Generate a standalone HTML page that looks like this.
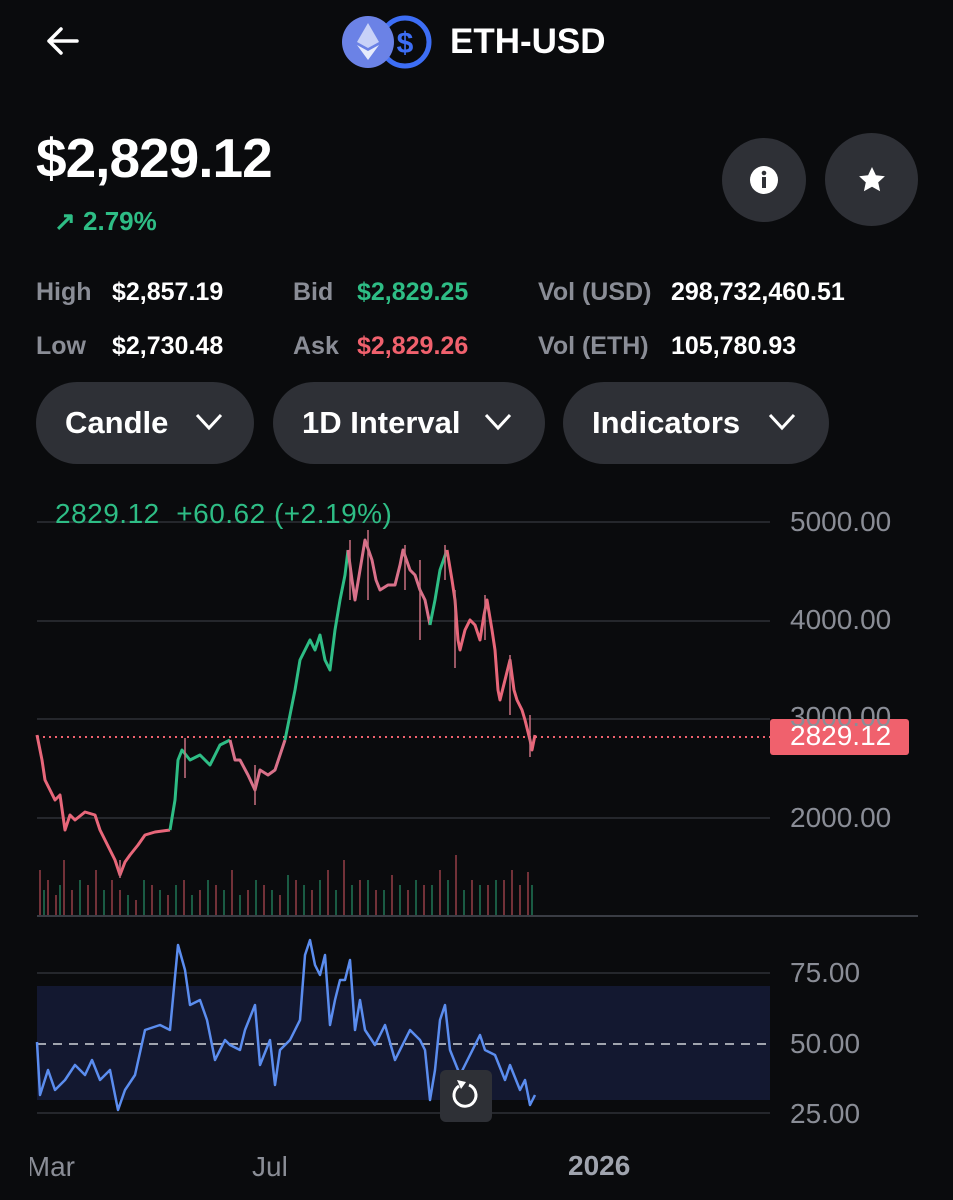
<!DOCTYPE html>
<html><head><meta charset="utf-8"><style>
body{margin:0;width:953px;height:1200px;background:#0a0b0d;color:#fff;font-family:"Liberation Sans",sans-serif;position:relative;overflow:hidden}
.a{position:absolute;white-space:nowrap}
.g{color:#8a8d96}
.pill{position:absolute;top:382px;height:82px;border-radius:41px;background:#2e3036;font-size:31px;font-weight:bold;line-height:82px;box-sizing:border-box;padding-left:29px}
.pill svg{position:absolute;top:30px}
.stat{font-size:25px;font-weight:bold}
.ax{font-size:28px;color:#8a8d96}
</style></head><body>
<svg class="a" style="left:44px;top:26px" width="36" height="30" viewBox="0 0 36 30"><path d="M33 15H5M17 3L5 15l12 12" stroke="#fff" stroke-width="3.5" fill="none" stroke-linecap="round" stroke-linejoin="round"/></svg>
<svg class="a" style="left:340px;top:15px" width="94" height="56" viewBox="0 0 94 56">
<circle cx="65" cy="27" r="24" fill="#0a0b0d" stroke="#3d6ef5" stroke-width="5"/>
<text x="65" y="38" font-size="30" font-weight="bold" fill="#3d6ef5" text-anchor="middle" font-family="Liberation Sans">$</text>
<circle cx="28" cy="27" r="26" fill="#6b82e6"/>
<path d="M28 8L17 27l11 6 11-6z" fill="#c8d2f8"/><path d="M17 30l11 15 11-15-11 6z" fill="#e6ebfc"/>
</svg>
<div class="a" style="left:450px;top:22px;font-size:35px;font-weight:bold">ETH-USD</div>
<div class="a" style="left:36px;top:126px;font-size:55px;font-weight:bold;letter-spacing:-1px">$2,829.12</div>
<div class="a" style="left:54px;top:206px;font-size:26px;color:#2ebd85;font-weight:bold">↗ 2.79%</div>
<div class="a" style="left:722px;top:138px;width:84px;height:84px;border-radius:50%;background:#2e3036"></div>
<svg class="a" style="left:749px;top:165px" width="30" height="30" viewBox="0 0 30 30"><circle cx="15" cy="15" r="14" fill="#fff"/><rect x="13" y="12" width="4" height="11" fill="#2e3036"/><circle cx="15" cy="8" r="2.3" fill="#2e3036"/></svg>
<div class="a" style="left:825px;top:133px;width:93px;height:93px;border-radius:50%;background:#2e3036"></div>
<svg class="a" style="left:857px;top:165px" width="30" height="30" viewBox="0 0 30 30"><path d="M15 2l3.9 8.3 9 1-6.7 6.1 1.9 8.9L15 21.8l-8.1 4.5 1.9-8.9L2.1 11.3l9-1z" fill="#fff"/></svg>
<div class="a stat g" style="left:36px;top:278px">High</div><div class="a stat" style="left:112px;top:278px">$2,857.19</div>
<div class="a stat g" style="left:36px;top:332px">Low</div><div class="a stat" style="left:112px;top:332px">$2,730.48</div>
<div class="a stat g" style="left:293px;top:278px">Bid</div><div class="a stat" style="left:357px;top:278px;color:#2ebd85">$2,829.25</div>
<div class="a stat g" style="left:293px;top:332px">Ask</div><div class="a stat" style="left:357px;top:332px;color:#f0616d">$2,829.26</div>
<div class="a stat g" style="left:538px;top:278px">Vol (USD)</div><div class="a stat" style="left:671px;top:278px">298,732,460.51</div>
<div class="a stat g" style="left:538px;top:332px">Vol (ETH)</div><div class="a stat" style="left:671px;top:332px">105,780.93</div>
<div class="pill" style="left:36px;width:218px">Candle<svg style="left:158px" width="30" height="20" viewBox="0 0 30 20"><path d="M3 3l12 13L27 3" stroke="#fff" stroke-width="3" fill="none"/></svg></div>
<div class="pill" style="left:273px;width:272px">1D Interval<svg style="left:210px" width="30" height="20" viewBox="0 0 30 20"><path d="M3 3l12 13L27 3" stroke="#fff" stroke-width="3" fill="none"/></svg></div>
<div class="pill" style="left:563px;width:266px">Indicators<svg style="left:204px" width="30" height="20" viewBox="0 0 30 20"><path d="M3 3l12 13L27 3" stroke="#fff" stroke-width="3" fill="none"/></svg></div>
<svg class="a" style="left:0;top:480px" width="953" height="720" viewBox="0 480 953 720">
<g stroke="#25272c" stroke-width="2"><line x1="37" y1="522" x2="770" y2="522"/><line x1="37" y1="621" x2="770" y2="621"/><line x1="37" y1="719" x2="770" y2="719"/><line x1="37" y1="818" x2="770" y2="818"/><line x1="37" y1="973" x2="770" y2="973"/><line x1="37" y1="1113" x2="770" y2="1113"/></g>
<line x1="37" y1="916" x2="918" y2="916" stroke="#3a3d44" stroke-width="2"/>
<g stroke-width="2" opacity="0.45">
<path stroke="#f0616d" d="M40 915V870M48 915V880M56 915V895M64 915V860M72 915V890M88 915V885M96 915V870M112 915V880M120 915V890M136 915V900M152 915V885M168 915V895M184 915V880M200 915V890M216 915V885M232 915V870M248 915V890M264 915V885M280 915V895M296 915V880M312 915V890M328 915V870M344 915V860M360 915V880M376 915V890M392 915V875M408 915V890M424 915V885M440 915V870M456 915V855M472 915V880M488 915V885M504 915V880M512 915V870M520 915V885M528 915V872"/>
<path stroke="#2ebd85" d="M44 915V890M60 915V885M80 915V880M104 915V890M128 915V895M144 915V880M160 915V890M176 915V885M192 915V895M208 915V880M224 915V890M240 915V895M256 915V880M272 915V890M288 915V875M304 915V885M320 915V880M336 915V890M352 915V885M368 915V880M384 915V890M400 915V885M416 915V880M432 915V885M448 915V880M464 915V890M480 915V885M496 915V880M532 915V885"/>
</g>
<line x1="37" y1="737" x2="770" y2="737" stroke="#f0616d" stroke-width="2" stroke-dasharray="2 4"/>
<g fill="none" stroke-width="3" stroke-linejoin="round">
<polyline stroke="#e8677a" points="37,735 42,760 45,780 50,790 55,800 60,795 65,830 70,815 75,820 85,812 95,815 100,830 105,840 110,850 115,860 120,875 125,862 130,855 138,845 145,835 155,832 170,830"/>
<polyline stroke="#2ebd85" points="170,830 175,800 178,760 182,750 190,760 200,755 210,765 220,745 230,740"/>
<polyline stroke="#d9718a" points="230,740 235,760 240,760 248,775 255,790 260,770 268,775 275,770 285,740"/>
<polyline stroke="#2ebd85" points="285,740 290,715 295,690 300,660 305,650 310,640 315,650 320,635 325,660 330,670 335,630 340,600 345,575 348,550"/>
<polyline stroke="#d9718a" points="348,550 352,580 355,600 360,570 365,540 372,560 376,580 380,590 388,585 395,585 400,565 403,550 410,570 415,575 420,590 425,600 430,625"/>
<polyline stroke="#2ebd85" points="430,625 435,600 440,570 447,550"/>
<polyline stroke="#e8677a" points="447,550 452,580 455,600 458,640 460,650 465,630 470,620 475,625 480,640 484,615 487,600 492,630 495,650 498,690 500,700 505,680 510,660 514,690 517,700 522,710 525,720 530,740 532,750 535,735"/>
</g>
<g stroke-width="1.5" stroke="#c87080"><path d="M350 540V600M368 530V600M405 545V590M445 545V580M455 590V668M485 595V640M510 655V715M530 715V757M255 765V805M420 560V640M185 738V778M120 860V878"/></g>
<rect x="37" y="986" width="733" height="114" fill="#131830"/>
<line x1="37" y1="1044" x2="770" y2="1044" stroke="#a0a4ae" stroke-width="2" stroke-dasharray="9 7"/>
<polyline fill="none" stroke="#5b8def" stroke-width="2.5" stroke-linejoin="round" points="37,1042 40,1095 48,1070 55,1090 65,1080 75,1065 85,1075 92,1060 100,1080 110,1070 118,1110 125,1090 135,1075 145,1030 160,1025 170,1030 178,945 185,970 190,1005 200,1000 207,1020 215,1060 225,1040 230,1045 240,1050 245,1030 255,1005 260,1065 270,1040 275,1085 280,1050 290,1040 300,1020 305,955 310,940 315,965 320,975 325,955 330,1025 335,1000 340,980 345,980 350,960 355,1030 360,1000 365,1030 375,1045 385,1025 395,1060 405,1040 410,1030 420,1040 425,1050 430,1100 435,1070 440,1020 445,1005 450,1050 460,1075 470,1055 480,1035 485,1050 495,1055 505,1080 510,1065 520,1090 525,1080 530,1105 535,1095"/>
<rect x="440" y="1070" width="52" height="52" rx="6" fill="#2e3036"/>
<path d="M459 1086a11 11 0 1 0 10 -1" stroke="#fff" stroke-width="3" fill="none"/><path d="M457 1080l4 9 5-7z" fill="#fff"/>
<rect x="770" y="719" width="139" height="36" rx="3" fill="#f0616d"/>
</svg>
<div class="a" style="left:55px;top:498px;font-size:28px;color:#2ebd85;letter-spacing:0.5px">2829.12&nbsp; +60.62 (+2.19%)</div>
<div class="a ax" style="left:790px;top:506px">5000.00</div>
<div class="a ax" style="left:790px;top:604px">4000.00</div>
<div class="a ax" style="left:790px;top:701px">3000.00</div>
<div class="a ax" style="left:790px;top:802px">2000.00</div>
<div class="a" style="left:790px;top:720px;font-size:28px;color:#fff">2829.12</div>
<div class="a ax" style="left:790px;top:957px">75.00</div>
<div class="a ax" style="left:790px;top:1028px">50.00</div>
<div class="a ax" style="left:790px;top:1098px">25.00</div>
<div class="a ax" style="left:30px;top:1151px;width:45px;overflow:hidden;direction:rtl">Mar</div>
<div class="a ax" style="left:252px;top:1151px">Jul</div>
<div class="a ax" style="left:568px;top:1150px;font-weight:bold;font-size:28px;color:#a0a4ae">2026</div>
</body></html>
